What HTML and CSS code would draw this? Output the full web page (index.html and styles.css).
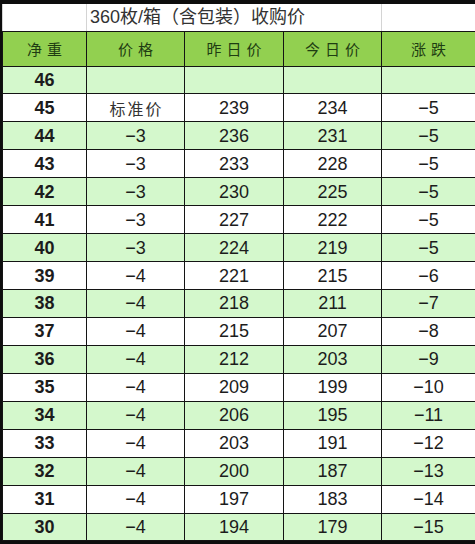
FILE: index.html
```html
<!DOCTYPE html>
<html lang="zh">
<head>
<meta charset="utf-8">
<link rel="stylesheet" href="styles.css">
</head>
<body>
<div class="frame">
<table class="price">
  <colgroup>
    <col class="c1"><col class="c2"><col class="c3"><col class="c4"><col class="c5">
  </colgroup>
  <tr class="title-row">
    <td class="blank"></td>
    <td class="title" colspan="3">360枚/箱（含包装）收购价</td>
    <td class="blank"></td>
  </tr>
  <tr class="head">
    <th>净重</th><th>价格</th><th>昨日价</th><th>今日价</th><th>涨跌</th>
  </tr>
  <tr class="g"><td class="w">46</td><td></td><td></td><td></td><td></td></tr>
  <tr><td class="w">45</td><td class="cjk">标准价</td><td>239</td><td>234</td><td>−5</td></tr>
  <tr class="g"><td class="w">44</td><td>−3</td><td>236</td><td>231</td><td>−5</td></tr>
  <tr><td class="w">43</td><td>−3</td><td>233</td><td>228</td><td>−5</td></tr>
  <tr class="g"><td class="w">42</td><td>−3</td><td>230</td><td>225</td><td>−5</td></tr>
  <tr><td class="w">41</td><td>−3</td><td>227</td><td>222</td><td>−5</td></tr>
  <tr class="g"><td class="w">40</td><td>−3</td><td>224</td><td>219</td><td>−5</td></tr>
  <tr><td class="w">39</td><td>−4</td><td>221</td><td>215</td><td>−6</td></tr>
  <tr class="g"><td class="w">38</td><td>−4</td><td>218</td><td>211</td><td>−7</td></tr>
  <tr><td class="w">37</td><td>−4</td><td>215</td><td>207</td><td>−8</td></tr>
  <tr class="g"><td class="w">36</td><td>−4</td><td>212</td><td>203</td><td>−9</td></tr>
  <tr><td class="w">35</td><td>−4</td><td>209</td><td>199</td><td>−10</td></tr>
  <tr class="g"><td class="w">34</td><td>−4</td><td>206</td><td>195</td><td>−11</td></tr>
  <tr><td class="w">33</td><td>−4</td><td>203</td><td>191</td><td>−12</td></tr>
  <tr class="g"><td class="w">32</td><td>−4</td><td>200</td><td>187</td><td>−13</td></tr>
  <tr><td class="w">31</td><td>−4</td><td>197</td><td>183</td><td>−14</td></tr>
  <tr class="g"><td class="w">30</td><td>−4</td><td>194</td><td>179</td><td>−15</td></tr>
</table>
</div>
</body>
</html>
```
FILE: styles.css
```css
html, body {
  margin: 0;
  padding: 0;
  background: #0d0d0d;
}
.frame {
  width: 475px;
  height: 544px;
  box-sizing: border-box;
  padding: 4px 0 3px 2px;
  background: #0d0d0d;
}
.price {
  width: 473px;
  border-collapse: collapse;
  table-layout: fixed;
  background: #fff;
  font-family: "Liberation Sans", "Noto Sans CJK SC", sans-serif;
  font-size: 18px;
  color: #1c1c1c;
}
.c1 { width: 84px; }
.c2 { width: 98px; }
.c3 { width: 99px; }
.c4 { width: 98px; }
.c5 { width: 94px; }
.price td, .price th {
  border: 1px solid #141414;
  text-align: center;
  padding: 0;
  line-height: 1;
}
.title-row { height: 27px; }
.title-row td {
  border: 1px solid #d4d4d4;
  border-bottom: 1px solid #141414;
  border-top: none;
  background: #fff;
}
.title-row .title {
  text-align: left;
  padding-left: 3px;
  font-family: "Liberation Sans", "Noto Sans CJK SC", sans-serif;
  font-size: 18px;
  color: #333;
  white-space: nowrap;
}
.head { height: 35px; }
.head th {
  background: #92d050;
  font-family: "Noto Sans CJK SC", sans-serif;
  font-weight: 400;
  font-size: 15px;
  letter-spacing: 5px;
  text-indent: 5px;
  color: #1e3d12;
}
.price tr.g td { background: #d4f8cc; }
.price tr:not(.title-row):not(.head) { height: 27.94px; }
.w { font-weight: 700; }
.cjk {
  font-family: "Noto Sans CJK SC", sans-serif;
  font-size: 16px;
  letter-spacing: 2px;
  text-indent: 2px;
  color: #333;
}
```
